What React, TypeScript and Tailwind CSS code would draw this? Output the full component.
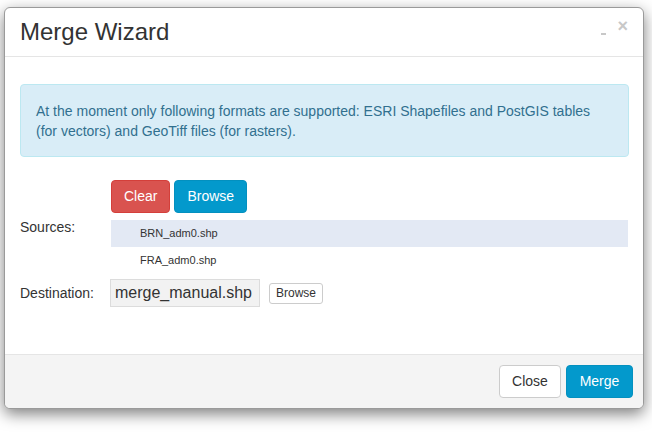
import React from "react";

export default function App() {
  const font = { fontFamily: '"Liberation Sans", Arial, Helvetica, sans-serif' };
  return (
    <div className="w-[652px] h-[442px] bg-white overflow-hidden" style={font}>
      <div className="ml-[4px] mt-[7px] w-[640px] h-[402px] border border-[#9a9a9a] rounded-[6px] bg-white shadow-[0_5px_15px_rgba(0,0,0,0.5)] flex flex-col overflow-hidden text-[#333]">
        {/* header */}
        <div className="h-[49px] shrink-0 border-b border-[#e5e5e5] flex items-center pl-[15px] pr-[15px]">
          <div className="text-[24px] leading-[26px] text-[#333] flex-1">Merge Wizard</div>
          <div className="flex items-start h-[26px] gap-[11px] mb-[2px]">
            <div className="w-[5px] h-[2px] bg-[#c8c8c8] mt-[15px]"></div>
            <div className="text-[#c8c8c8] text-[18px] leading-[14px] font-bold mt-[1px]">×</div>
          </div>
        </div>
        {/* body */}
        <div className="flex-1 pt-[27px] px-[15px]">
          <div className="bg-[#d9edf7] border border-[#bce8f1] rounded-[4px] text-[#31708f] text-[14px] leading-[20px] px-[15px] pt-[16px] pb-[15px] w-[609px]">
            At the moment only following formats are supported: ESRI Shapefiles and PostGIS tables (for vectors) and GeoTiff files (for rasters).
          </div>
          <div className="mt-[23px] flex items-center">
            <div className="w-[90px] text-[14px] leading-[20px]">Sources:</div>
            <div className="flex-1 pl-px flex flex-col">
              <div className="flex gap-[4px]">
                <button className="h-[33px] px-[12px] rounded-[4px] bg-[#d9534f] border border-[#d43f3a] text-white text-[14px]">Clear</button>
                <button className="h-[33px] px-[12px] rounded-[4px] bg-[#0399cc] border border-[#0390bf] text-white text-[14px]">Browse</button>
              </div>
              <div className="mt-[7px] w-[517px]">
                <div className="h-[27px] bg-[#e3e9f4] flex items-center pl-[29px] text-[11px] text-[#333]">BRN_adm0.shp</div>
                <div className="h-[27px] flex items-center pl-[29px] text-[11px] text-[#333]">FRA_adm0.shp</div>
              </div>
            </div>
          </div>
          <div className="mt-[5px] flex items-center">
            <div className="w-[90px] text-[14px] leading-[20px]">Destination:</div>
            <div className="w-[150px] h-[28px] bg-[#f2f2f2] border border-[#dcdcdc] flex items-center pl-[4px] text-[16px] text-[#333]">merge_manual.shp</div>
            <button className="ml-[9px] h-[21px] px-[6px] bg-white border border-[#cccccc] rounded-[3px] text-[12px] leading-[12px] text-[#333]">Browse</button>
          </div>
        </div>
        {/* footer */}
        <div className="h-[54px] shrink-0 border-t border-[#e5e5e5] bg-[#f4f4f4] flex items-center justify-end gap-[5px] pr-[10px]">
          <button className="h-[33px] w-[62px] bg-white border border-[#cccccc] rounded-[4px] text-[14px] text-[#333]">Close</button>
          <button className="h-[33px] w-[67px] bg-[#0399cc] border border-[#0390bf] rounded-[4px] text-[14px] text-white">Merge</button>
        </div>
      </div>
    </div>
  );
}
